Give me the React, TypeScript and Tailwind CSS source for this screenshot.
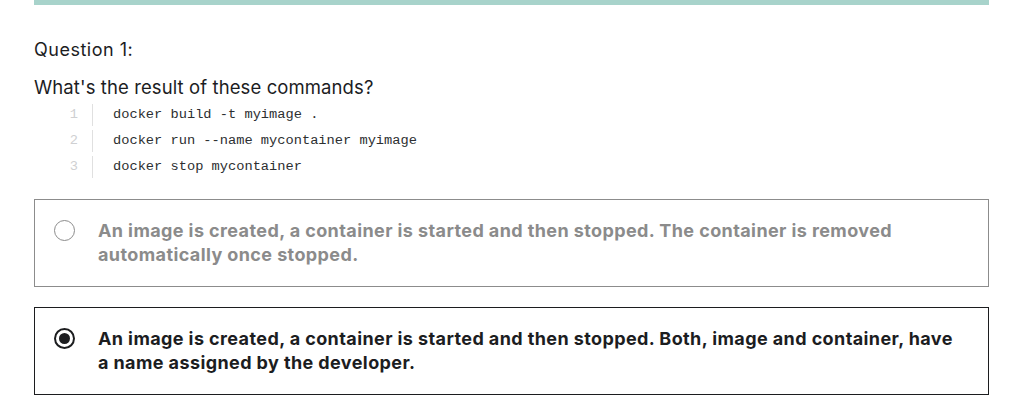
import { useState } from "react";

const code = [
    "docker build -t myimage .",
    "docker run --name mycontainer myimage",
    "docker stop mycontainer",
];

const options = [
    "An image is created, a container is started and then stopped. The container is removed automatically once stopped.",
    "An image is created, a container is started and then stopped. Both, image and container, have a name assigned by the developer.",
];

export default function App() {
    const [selected, setSelected] = useState(1);

    return (
        <div className="w-[1036px] h-[408px] bg-white overflow-hidden font-['Inter',sans-serif] text-[#1c1d1f]">
            <div className="ml-[34px] w-[955px]">
                <div className="h-[5px] bg-[#a8d3cb]" />

                <div className="mt-[35px] text-[18px] leading-[20px] tracking-[0.5px]">Question 1:</div>

                <div className="mt-[15px] text-[18.5px] leading-[24px] tracking-[0.1px]">What's the result of these commands?</div>

                <div className="mt-[3px] font-['Liberation_Mono',monospace] text-[13.7px]">
                    {code.map((line, i) => (
                        <div key={i} className="flex h-[26px] items-center">
                            <span className="w-[58px] pr-[14px] text-right text-[#cfd0d2]">{i + 1}</span>
                            <span className="h-[22px] border-l border-[#e0e0e0]" />
                            <span className="pl-[20px] whitespace-pre text-[#2d2f31]">{line}</span>
                        </div>
                    ))}
                </div>

                <div className="mt-[19px] flex flex-col gap-[20px]">
                    {options.map((text, i) => {
                        const isSel = selected === i;
                        return (
                            <label
                                key={i}
                                onClick={() => setSelected(i)}
                                className={
                                    isSel
                                        ? "flex h-[88px] items-start gap-[23px] border border-[#1c1d1f] pl-[19px] pr-[24px] pt-[19px]"
                                        : "flex h-[88px] items-start gap-[23px] border border-[#8c8c8c] pl-[19px] pr-[24px] pt-[19px]"
                                }
                            >
                                <span
                                    className={
                                        isSel
                                            ? "mt-[1px] flex h-[21px] w-[21px] shrink-0 items-center justify-center rounded-full border-2 border-[#1c1d1f]"
                                            : "mt-[1px] flex h-[21px] w-[21px] shrink-0 items-center justify-center rounded-full border-[1.5px] border-[#8c8c8c]"
                                    }
                                >
                                    {isSel && <span className="h-[11px] w-[11px] rounded-full bg-[#1c1d1f]" />}
                                </span>
                                <span
                                    className={
                                        isSel
                                            ? "text-[18px] font-bold leading-[24px] tracking-[0.4px] text-[#1c1d1f]"
                                            : "text-[18px] font-bold leading-[24px] tracking-[0.4px] text-[#8b8b8b]"
                                    }
                                >
                                    {text}
                                </span>
                            </label>
                        );
                    })}
                </div>
            </div>
        </div>
    );
}
